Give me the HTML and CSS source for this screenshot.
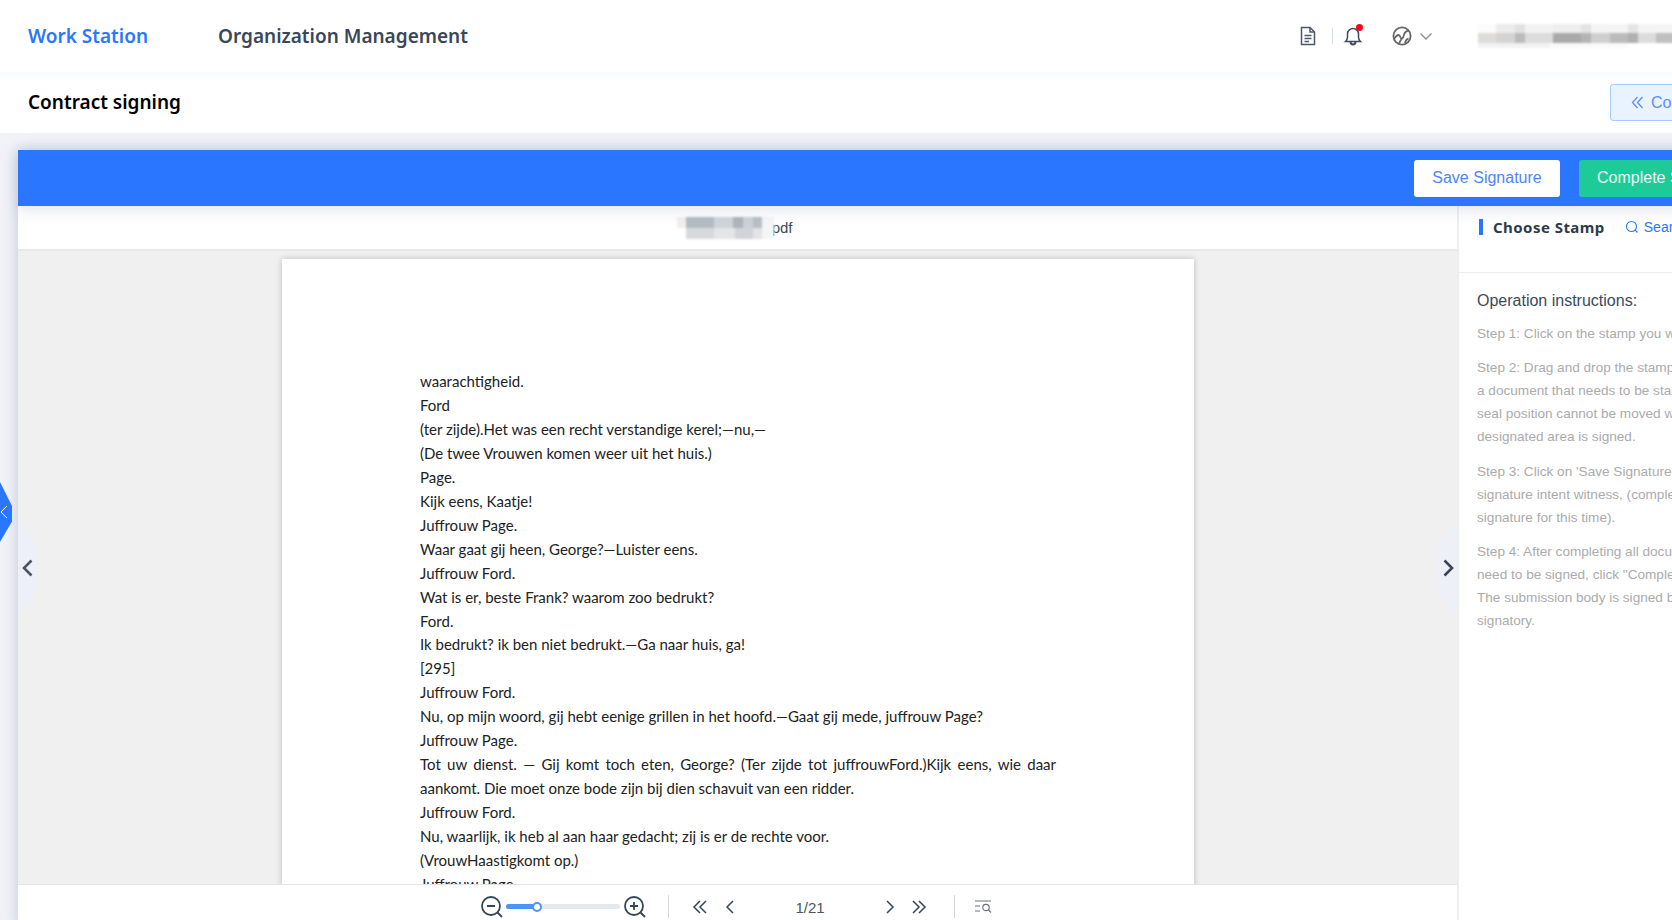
FILE: index.html
```html
<!DOCTYPE html>
<html lang="en">
<head>
<meta charset="utf-8">
<title>Contract signing</title>
<link rel="stylesheet" href="styles.css">
</head>
<body>
<div class="app">
  <header class="nav">
    <a class="nav-link active">Work Station</a>
    <a class="nav-link">Organization Management</a>
    <div class="nav-tools">
      <svg class="ic-doc" width="18" height="20" viewBox="0 0 18 20" fill="none" stroke="#4a5a6c" stroke-width="1.5"><path d="M2.5 1.5h8.5l4.5 4.5v12.500h-13z"/><path d="M11 1.500v4.500h4.500M5.500 9.500h7M5.500 12.500h7M5.500 15.500h4.500"/></svg>
      <span class="nav-sep"></span>
      <span class="bell">
        <svg width="20" height="20" viewBox="0 0 20 20" fill="none" stroke="#3e4c5c" stroke-width="1.500"><path d="M2.500 15.500c1.500-1.200 2-2.500 2-4.500V8a5.500 5.500 0 0 1 11 0v3c0 2 .5 3.300 2 4.500z"/><path d="M7.500 15.500c0 4 5 4 5 0" stroke-width="2"/></svg>
        <i class="dot"></i>
      </span>
      <svg class="ic-globe" width="20" height="20" viewBox="0 0 20 20" fill="none" stroke="#666" stroke-width="1.800"><circle cx="10" cy="10" r="8.600"/><path d="M2 12.500c1.500-.2 2-3.500 4.500-3.500 2.200 0 1.500 4 3.500 3.500M10 12.500c2.500-.8 1-4.500 3.500-6.500 1-.8 2-1.200 3-1.200M7 17.500c1-2.500 2-3.500 3-5M13 17c.3-2 1-3.500 3.500-4.500"/></svg>
      <svg class="ic-caret" width="14" height="9" viewBox="0 0 14 9" fill="none" stroke="#8a8f98" stroke-width="1.400"><path d="M1.500 1.500l5.500 5.500 5.500-5.500"/></svg>
      <span class="mosaic mosaic-user"></span>
    </div>
  </header>

  <section class="titlebar">
    <h1 class="title">Contract signing</h1>
    <button class="collapse-btn">
      <svg width="13" height="13" viewBox="0 0 13 13" fill="none" stroke="#5b8ffb" stroke-width="1.300"><path d="M6.500 1l-5 5.500 5 5.500M11.500 1l-5 5.500 5 5.500"/></svg>
      Collapse
    </button>
  </section>

  <main class="main">
    <span class="side-tab">
      <svg width="8" height="14" viewBox="0 0 8 14" fill="none" stroke="#fff" stroke-width="1"><path d="M7 1L1 7l6 6"/></svg>
    </span>
    <div class="panel">
      <div class="actionbar">
        <button class="btn btn-save">Save Signature</button>
        <button class="btn btn-complete">Complete Signature</button>
      </div>
      <div class="workspace">
        <section class="viewer">
          <div class="filename"><span class="mosaic mosaic-file"></span><span class="ext">.pdf</span></div>
          <div class="stage">
            <button class="pager pager-left"><svg width="11" height="18" viewBox="0 0 11 18" fill="none" stroke="#4a5565" stroke-width="2.600"><path d="M9.500 1.500L2 9l7.500 7.500"/></svg></button>
            <button class="pager pager-right"><svg width="11" height="18" viewBox="0 0 11 18" fill="none" stroke="#3a4454" stroke-width="2.600"><path d="M1.500 1.500L9 9l-7.500 7.500"/></svg></button>
            <article class="page">
              <p>waarachtigheid.</p>
              <p>Ford</p>
              <p>(ter zijde).Het was een recht verstandige kerel;—nu,—</p>
              <p>(De twee Vrouwen komen weer uit het huis.)</p>
              <p>Page.</p>
              <p>Kijk eens, Kaatje!</p>
              <p>Juffrouw Page.</p>
              <p>Waar gaat gij heen, George?—Luister eens.</p>
              <p>Juffrouw Ford.</p>
              <p>Wat is er, beste Frank? waarom zoo bedrukt?</p>
              <p>Ford.</p>
              <p>Ik bedrukt? ik ben niet bedrukt.—Ga naar huis, ga!</p>
              <p>[295]</p>
              <p>Juffrouw Ford.</p>
              <p>Nu, op mijn woord, gij hebt eenige grillen in het hoofd.—Gaat gij mede, juffrouw Page?</p>
              <p>Juffrouw Page.</p>
              <p class="just">Tot uw dienst. — Gij komt toch eten, George? (Ter zijde tot juffrouwFord.)Kijk eens, wie daar</p>
              <p>aankomt. Die moet onze bode zijn bij dien schavuit van een ridder.</p>
              <p>Juffrouw Ford.</p>
              <p>Nu, waarlijk, ik heb al aan haar gedacht; zij is er de rechte voor.</p>
              <p>(VrouwHaastigkomt op.)</p>
              <p>Juffrouw Page.</p>
            </article>
          </div>
          <div class="toolbar">
            <svg class="t-zoomout" width="24" height="24" viewBox="0 0 24 24" fill="none" stroke="#33475b" stroke-width="1.800"><circle cx="11" cy="11" r="9"/><path d="M7 11h8M17.500 17.500l4.500 4.500"/></svg>
            <div class="slider"><i class="slider-fill"></i><i class="slider-thumb"></i></div>
            <svg class="t-zoomin" width="24" height="24" viewBox="0 0 24 24" fill="none" stroke="#33475b" stroke-width="1.800"><circle cx="11" cy="11" r="9"/><path d="M7 11h8M11 7v8M17.500 17.500l4.500 4.500"/></svg>
            <span class="t-sep t-sep-1"></span>
            <svg class="t-first" width="16" height="14" viewBox="0 0 16 14" fill="none" stroke="#33475b" stroke-width="1.500"><path d="M8 1L2 7l6 6M14 1L8 7l6 6"/></svg>
            <svg class="t-prev" width="10" height="14" viewBox="0 0 10 14" fill="none" stroke="#33475b" stroke-width="1.500"><path d="M8 1L2 7l6 6"/></svg>
            <span class="t-count">1/21</span>
            <svg class="t-next" width="10" height="14" viewBox="0 0 10 14" fill="none" stroke="#33475b" stroke-width="1.500"><path d="M2 1l6 6-6 6"/></svg>
            <svg class="t-last" width="16" height="14" viewBox="0 0 16 14" fill="none" stroke="#33475b" stroke-width="1.500"><path d="M2 1l6 6-6 6M8 1l6 6-6 6"/></svg>
            <span class="t-sep t-sep-2"></span>
            <svg class="t-list" width="18" height="14" viewBox="0 0 18 14" fill="none" stroke="#6b7480" stroke-width="1.200"><path d="M0 1h16M0 6h5M0 11h5"/><circle cx="11" cy="7.500" r="3.200"/><path d="M13.500 10l2.500 2.500"/></svg>
          </div>
        </section>
        <aside class="sidebar">
          <div class="side-head">
            <span class="side-title">Choose Stamp</span>
            <span class="side-search">
              <svg width="14" height="14" viewBox="0 0 14 14" fill="none" stroke="#2a76ff" stroke-width="1.100"><circle cx="6.500" cy="6.500" r="5"/><path d="M10 10l2.500 2.500"/></svg>
              Search
            </span>
          </div>
          <div class="guide">
            <h2 class="guide-title">Operation instructions:</h2>
            <p class="step">Step 1: Click on the stamp you want to use</p>
            <p class="step">Step 2: Drag and drop the stamp onto<br>a document that needs to be stamped, the<br>seal position cannot be moved when the<br>designated area is signed.</p>
            <p class="step">Step 3: Click on 'Save Signature' to save the<br>signature intent witness, (complete the<br>signature for this time).</p>
            <p class="step">Step 4: After completing all documents that<br>need to be signed, click "Complete Signature"<br>The submission body is signed by the<br>signatory.</p>
          </div>
        </aside>
      </div>
    </div>
  </main>
</div>
</body>
</html>
```
FILE: styles.css
```css
* { box-sizing: border-box; }
html, body { margin: 0; padding: 0; width: 1672px; height: 920px; overflow: hidden; background: #fff; }
body { font-family: "Liberation Sans", Arial, sans-serif; }
button { font-family: inherit; cursor: pointer; }
p, h1, h2 { margin: 0; }

.app { width: 1960px; display: flex; flex-direction: column; background: #f1f3f8; }

/* top navigation */
.nav { height: 72px; flex: none; display: flex; align-items: center; padding: 0 0 1px 28px; background: #fff; }
.nav-link { font-family: "Noto Sans", sans-serif; font-weight: 600; font-size: 19px; color: #3a4757; margin-right: 70px; }
.nav-link.active { color: #2a76ff; }
.nav-tools { display: flex; align-items: center; position: absolute; left: 1299px; top: 0; height: 72px; }
.nav-sep { width: 1px; height: 16px; background: #d5dbe3; margin: 0 10px 0 15px; }
.bell { position: relative; display: flex; width: 20px; height: 20px; }
.dot { position: absolute; right: 0; top: -2px; width: 7px; height: 7px; border-radius: 50%; background: #f5071b; }
.ic-globe { margin-left: 29px; }
.ic-caret { margin-left: 7px; }
.mosaic { display: block; }
.mosaic-user {
  margin-left: 45px; width: 240px; height: 25px; filter: blur(1px);
  background:
    linear-gradient(90deg, #dedcda 0 18px, #d4d4d4 18px 37px, #bbb 37px 47px, #dcdcdc 47px 75px, #aaa 75px 103px, #b4b4b4 103px 113px, #cfcfcf 113px 132px, #bbb 132px 150px, #b0b0b0 150px 160px, #dcdcdc 160px 178px, #c0c0c0 178px) 0 9px / 100% 10px no-repeat,
    linear-gradient(90deg, #fbfbfb 0 18px, #ececec 18px 37px, #e2e2e2 37px 47px, #f2f2f2 47px 75px, #eee 75px 103px, #e4e4e4 103px 113px, #f4f4f4 113px 150px, #e4e4e4 150px 160px, #f4f4f4 160px) 0 0 / 100% 9px no-repeat,
    linear-gradient(90deg, #f2f2f2 0 72px, #fafafa 72px 150px, transparent 150px) 0 19px / 100% 5px no-repeat;
}

/* title bar */
.titlebar { height: 61px; flex: none; display: flex; align-items: center; padding: 0 0 2px 28px; position: relative; background: linear-gradient(#f9fafc 0, #fff 10px); }
.title { font-family: "Noto Sans", sans-serif; font-weight: 600; font-size: 19px; color: #000; }
.collapse-btn { position: absolute; left: 1610px; top: 12px; height: 37px; width: 130px; border: 1px solid #a9ccfd; border-radius: 3px; background: #e9f2ff; color: #5b8ffb; font-size: 16px; display: flex; align-items: center; gap: 7px; padding: 0 0 0 20px; }

/* main */
.main { padding: 17px 0 0 18px; position: relative; background: #f1f3f8; }
.side-tab { position: absolute; left: 0; top: 349px; width: 12px; height: 60px; background: #2a76ff; clip-path: polygon(0 0, 100% 40%, 100% 66%, 0 100%); display: flex; align-items: center; justify-content: flex-start; z-index: 3; }
.panel { display: flex; flex-direction: column; box-shadow: 0 0 14px rgba(120, 130, 165, .4); }

.actionbar { height: 56px; flex: none; display: flex; align-items: center; padding-left: 1396px; gap: 19px; background: #2a76ff; position: relative; z-index: 2; box-shadow: 0 4px 14px rgba(120, 130, 165, .22); }
.btn { height: 37px; border: 0; border-radius: 3px; font-size: 16px; }
.btn-save { width: 146px; background: #fff; color: #4d86f9; }
.btn-complete { width: 170px; background: #1ecb98; color: #e6fbf4; text-align: left; padding-left: 18px; white-space: nowrap; }

.workspace { display: flex; background: #fff; }
.viewer { width: 1439px; flex: none; display: flex; flex-direction: column; }
.filename { height: 45px; flex: none; display: flex; align-items: center; justify-content: center; border-bottom: 2px solid #e8e8e8; background: #fff; padding-right: 5px; font-size: 15px; color: #3a4a5c; }
.mosaic-file {
  width: 97px; height: 22px; margin-right: -7px; filter: blur(1px); position: relative;
  background:
    linear-gradient(90deg, #f4efe9 0 9%, #b4bcc3 9% 38%, #cfd4d9 38% 58%, #aeb4ba 58% 68%, #ccd1d7 68% 78%, #b8bfc6 78% 88%, #f6f6f7 88%) 0 0 / 100% 11px no-repeat,
    linear-gradient(90deg, transparent 0 9%, #d6dadd 9% 38%, #e3e6e7 38% 60%, #d0d4d8 60% 78%, #e1e3e6 78% 88%, #f4f5f6 88%) 0 11px / 100% 11px no-repeat;
}
.stage { height: 633px; flex: none; background: #f0f0f0; padding: 8px 0 0 264px; overflow: hidden; position: relative; }
.page { width: 912px; height: 700px; background: #fff; box-shadow: 0 0 6px rgba(0, 0, 0, .22); padding: 111px 138px 0; font-family: Lato, sans-serif; font-size: 15px; line-height: 23.950px; color: #222; white-space: nowrap; }
.just { text-align: justify; text-align-last: justify; white-space: normal; }

.pager { position: absolute; top: 274px; width: 20px; height: 86px; border: 0; padding: 0; background: #eef0f8; display: flex; align-items: center; justify-content: center; }
.pager-left { left: 0; border-radius: 0 20px 20px 0 / 0 34px 34px 0; padding-right: 2px; }
.pager-right { right: 0; border-radius: 20px 0 0 20px / 34px 0 0 34px; padding-left: 3px; }

.toolbar { height: 44px; flex: none; background: #fff; border-top: 1px solid #e2e4e8; font-size: 15px; color: #4a5565; display: flex; align-items: flex-start; padding: 10px 0 0 462px; }
.toolbar svg { flex: none; }
.t-first, .t-prev, .t-next, .t-last { margin-top: 5px; }
.t-list { margin-top: 5px; }
.t-count { margin-top: 4px; }
.slider { width: 114px; height: 5px; background: #e4e8ef; border-radius: 3px; margin: 9px 0 0 2px; position: relative; flex: none; }
.slider-fill { position: absolute; left: 0; top: 0; height: 100%; width: 31px; background: #4a94fb; border-radius: 3px; }
.slider-thumb { position: absolute; left: 26px; top: -2.500px; width: 10px; height: 10px; border-radius: 50%; background: #fff; border: 2px solid #4a94fb; }
.t-zoomin { margin-left: 3px; }
.t-sep { width: 1px; height: 23px; background: #d4d6da; flex: none; }
.t-sep-1 { margin-left: 21px; }
.t-first { margin-left: 23px; }
.t-prev { margin-left: 17px; }
.t-count { width: 100px; margin-left: 25px; text-align: center; flex: none; }
.t-next { margin-left: 25px; }
.t-last { margin-left: 16px; }
.t-sep-2 { margin-left: 27px; }
.t-list { margin-left: 20px; }

/* sidebar */
.sidebar { flex: 1; min-width: 0; border-left: 2px solid #eceef2; background: #fff; white-space: nowrap; position: relative; z-index: 1; }
.side-head { height: 67px; display: flex; align-items: flex-start; padding: 13px 0 0 20px; border-bottom: 1px solid #eceef2; background: #fff; }
.side-title { font-family: "Noto Sans", sans-serif; font-weight: 700; font-size: 15px; letter-spacing: .45px; color: #2f3b4a; border-left: 4px solid #2a76ff; padding-left: 10px; line-height: 16px; }
.side-search { margin-left: 20px; color: #2a76ff; font-size: 14px; display: flex; align-items: center; gap: 5px; line-height: 16px; }
.guide { padding: 18px 0 0 18px; }
.guide-title { font-weight: 400; font-size: 16px; line-height: 20px; color: #3a4a5c; margin-bottom: 11px; }
.step { font-size: 13.600px; line-height: 23px; color: #ababab; margin-bottom: 11.400px; }
```
